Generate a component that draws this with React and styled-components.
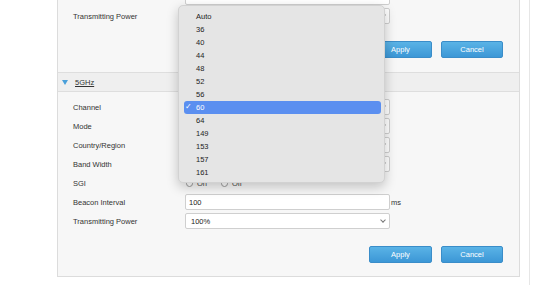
import React from 'react'
import styled, { createGlobalStyle } from 'styled-components'

const Global = createGlobalStyle`
  html, body { margin: 0; padding: 0; background: #fff; overflow: hidden; }
  body { font-family: "Liberation Sans", Arial, Helvetica, sans-serif; }
`

const Frame = styled.div`
  position: relative;
  width: 530px;
  box-sizing: border-box;
  margin-top: -11px;
  padding: 0 9px 0 57px;
  border-right: 1px solid #e6e6e6;
  min-height: 300px;
`

const Panel = styled.div`
  width: 463px;
  box-sizing: border-box;
  background: #f7f7f7;
  border: 1px solid #dcdcdc;
  border-top: none;
`

const Section = styled.div`
  padding: ${p => p.$top || 0}px 16px ${p => p.$bottom || 13}px 15px;
`

const Rows = styled.div`
  display: flex;
  flex-direction: column;
  gap: 3px;
`

const Row = styled.div`
  display: flex;
  align-items: center;
  height: 16px;
`

const Label = styled.div`
  width: 112px;
  font-size: 7.5px;
  color: #333;
`

const Field = styled.div`
  position: relative;
  width: 205px;
  height: 16px;
  box-sizing: border-box;
  background: #fff;
  border: 1px solid #cfcfcf;
  border-radius: 2px;
  font-size: 7.5px;
  color: #222;
  display: flex;
  align-items: center;
  padding-left: ${p => p.$pad || 3}px;
`

const Chevron = styled.span`
  position: absolute;
  right: 4px;
  top: 4px;
  width: 3px;
  height: 3px;
  border-right: 1px solid #777;
  border-bottom: 1px solid #777;
  transform: rotate(45deg);
`

const Unit = styled.span`
  font-size: 7.5px;
  color: #333;
  margin-left: 1px;
`

const Radios = styled.div`
  display: flex;
  align-items: center;
  gap: 4px;
  font-size: 7.5px;
  color: #444;
  padding-left: 1px;
`

const Radio = styled.span`
  width: 7px;
  height: 7px;
  box-sizing: border-box;
  border: 1px solid #999;
  border-radius: 50%;
  background: #fff;
`

const RadioText = styled.span`
  margin-right: 10px;
`

const Buttons = styled.div`
  display: flex;
  justify-content: flex-end;
  gap: 9px;
  margin-top: 17px;
`

const Button = styled.button`
  width: ${p => p.$w}px;
  height: 17px;
  padding: 0;
  border: 1px solid #3a8dc9;
  border-radius: 2px;
  background: linear-gradient(#5ab3e6, #3c97d6);
  color: #fff;
  font-family: inherit;
  font-size: 7.5px;
`

const Header = styled.div`
  display: flex;
  align-items: center;
  height: 18px;
  background: #efefef;
  border-top: 1px solid #dedede;
  border-bottom: 1px solid #dedede;
  padding-left: 4px;
  gap: 7px;
  font-size: 7.5px;
  color: #333;
`

const Triangle = styled.span`
  width: 0;
  height: 0;
  border-left: 3px solid transparent;
  border-right: 3px solid transparent;
  border-top: 5px solid #4aa0da;
`

const Link = styled.span`
  text-decoration: underline;
`

const Menu = styled.ul`
  position: absolute;
  left: 178px;
  top: 16px;
  width: 207px;
  margin: 0;
  padding: 4px 0 3px;
  list-style: none;
  box-sizing: border-box;
  background: #e5e5e5;
  border: 1px solid #d2d2d2;
  border-radius: 5px;
  box-shadow: 0 4px 12px rgba(0, 0, 0, 0.22);
  z-index: 5;
`

const Item = styled.li`
  position: relative;
  height: 13px;
  margin: 0 3px 0 5px;
  padding-left: 12px;
  border-radius: 3px;
  display: flex;
  align-items: center;
  font-size: 7.5px;
  color: ${p => (p.$active ? '#fff' : '#222')};
  background: ${p => (p.$active ? '#5b8ff0' : 'transparent')};
`

const Check = styled.span`
  position: absolute;
  left: 1px;
  top: 1px;
  font-size: 8px;
`

const channels = ['Auto', '36', '40', '44', '48', '52', '56', '60', '64', '149', '153', '157', '161']

const Select = ({ value, pad }) => (
  <Field $pad={pad}>
    {value}
    <Chevron />
  </Field>
)

export default function App() {
  return (
    <>
      <Global />
      <Frame>
        <Panel>
          <Section $bottom={14}>
            <Rows>
              <Row>
                <Label />
                <Field />
              </Row>
              <Row>
                <Label>Transmitting Power</Label>
                <Select />
              </Row>
            </Rows>
            <Buttons>
              <Button $w={63}>Apply</Button>
              <Button $w={62}>Cancel</Button>
            </Buttons>
          </Section>

          <Header>
            <Triangle />
            <Link>5GHz</Link>
          </Header>

          <Section $top={7}>
            <Rows>
              <Row>
                <Label>Channel</Label>
                <Select />
              </Row>
              <Row>
                <Label>Mode</Label>
                <Select />
              </Row>
              <Row>
                <Label>Country/Region</Label>
                <Select />
              </Row>
              <Row>
                <Label>Band Width</Label>
                <Select />
              </Row>
              <Row>
                <Label>SGI</Label>
                <Radios>
                  <Radio />
                  <RadioText>On</RadioText>
                  <Radio />
                  <RadioText>Off</RadioText>
                </Radios>
              </Row>
              <Row>
                <Label>Beacon Interval</Label>
                <Field>100</Field>
                <Unit>ms</Unit>
              </Row>
              <Row>
                <Label>Transmitting Power</Label>
                <Select value="100%" pad={5} />
              </Row>
            </Rows>
            <Buttons>
              <Button $w={63}>Apply</Button>
              <Button $w={62}>Cancel</Button>
            </Buttons>
          </Section>
        </Panel>

        <Menu>
          {channels.map(c => (
            <Item key={c} $active={c === '60'}>
              {c === '60' && <Check>✓</Check>}
              {c}
            </Item>
          ))}
        </Menu>
      </Frame>
    </>
  )
}
